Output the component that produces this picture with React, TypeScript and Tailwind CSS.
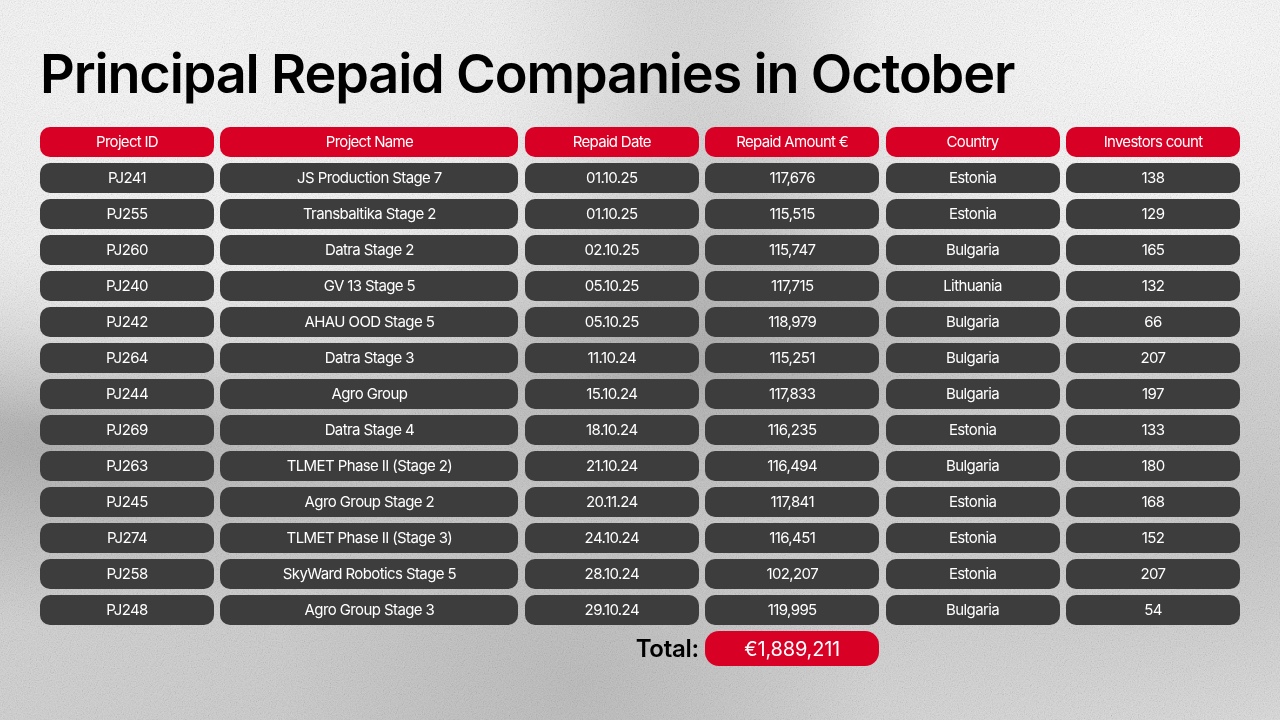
const rows = [
  ["PJ241", "JS Production Stage 7", "01.10.25", "117,676", "Estonia", "138"],
  ["PJ255", "Transbaltika Stage 2", "01.10.25", "115,515", "Estonia", "129"],
  ["PJ260", "Datra Stage 2", "02.10.25", "115,747", "Bulgaria", "165"],
  ["PJ240", "GV 13 Stage 5", "05.10.25", "117,715", "Lithuania", "132"],
  ["PJ242", "AHAU OOD Stage 5", "05.10.25", "118,979", "Bulgaria", "66"],
  ["PJ264", "Datra Stage 3", "11.10.24", "115,251", "Bulgaria", "207"],
  ["PJ244", "Agro Group", "15.10.24", "117,833", "Bulgaria", "197"],
  ["PJ269", "Datra Stage 4", "18.10.24", "116,235", "Estonia", "133"],
  ["PJ263", "TLMET Phase II (Stage 2)", "21.10.24", "116,494", "Bulgaria", "180"],
  ["PJ245", "Agro Group Stage 2", "20.11.24", "117,841", "Estonia", "168"],
  ["PJ274", "TLMET Phase II (Stage 3)", "24.10.24", "116,451", "Estonia", "152"],
  ["PJ258", "SkyWard Robotics Stage 5", "28.10.24", "102,207", "Estonia", "207"],
  ["PJ248", "Agro Group Stage 3", "29.10.24", "119,995", "Bulgaria", "54"],
];

const headers = ["Project ID", "Project Name", "Repaid Date", "Repaid Amount €", "Country", "Investors count"];

const gridCols = "grid grid-cols-[174fr_298fr_174fr_174fr_174fr_174fr] gap-x-[6.4px]";

export default function App() {
  return (
    <div
      className="relative w-[1280px] h-[720px] overflow-hidden bg-[#dedede]"
      style={{ fontFamily: "Inter, 'Noto Sans', sans-serif" }}
    >
      {/* background texture */}
      <div className="absolute inset-0 bg-[radial-gradient(ellipse_at_12%_8%,#f8f8f8_0%,#f2f2f2_22%,transparent_40%),radial-gradient(ellipse_at_92%_6%,#fbfbfb_0%,#f3f3f3_18%,transparent_32%),radial-gradient(ellipse_at_60%_8%,#c4c4c4_0%,transparent_25%),radial-gradient(ellipse_at_4%_62%,#b4b4b4_0%,transparent_28%),radial-gradient(ellipse_at_55%_50%,#b0b0b0_0%,transparent_32%),radial-gradient(ellipse_at_45%_95%,#c0c0c0_0%,transparent_30%),radial-gradient(ellipse_at_96%_72%,#cacaca_0%,transparent_32%),linear-gradient(120deg,#dadada_0%,#cdcdcd_50%,#e0e0e0_100%)]" />
      <svg className="absolute inset-0 opacity-[0.35] mix-blend-multiply" width="1280" height="720">
        <filter id="noise">
          <feTurbulence type="fractalNoise" baseFrequency="0.85" numOctaves="2" stitchTiles="stitch" />
          <feColorMatrix type="saturate" values="0" />
          <feComponentTransfer>
            <feFuncR type="linear" slope="1.6" intercept="-0.2" />
            <feFuncG type="linear" slope="1.6" intercept="-0.2" />
            <feFuncB type="linear" slope="1.6" intercept="-0.2" />
          </feComponentTransfer>
        </filter>
        <rect width="100%" height="100%" filter="url(#noise)" />
      </svg>

      <div className="relative px-10 pt-[42px]">
        <h1 className="text-[54px] leading-[64px] font-semibold tracking-[-1.15px] text-black">
          Principal Repaid Companies in October
        </h1>

        <div className="mt-[21px] flex flex-col gap-y-[6px]">
          <div className={gridCols}>
            {headers.map((h) => (
              <div
                key={h}
                className="h-[30px] rounded-[10px] bg-[#d90025] text-white text-[15px] tracking-[-0.7px] flex items-center justify-center"
              >
                {h}
              </div>
            ))}
          </div>
          {rows.map((row) => (
            <div key={row[0]} className={gridCols}>
              {row.map((cell, i) => (
                <div
                  key={i}
                  className="h-[30px] rounded-[10px] bg-[#3d3d3d] text-white text-[15px] tracking-[-0.6px] flex items-center justify-center"
                >
                  {cell}
                </div>
              ))}
            </div>
          ))}
          <div className={gridCols}>
            <div className="col-span-3 flex items-center justify-end text-[24px] font-semibold tracking-[-0.3px] text-black">
              Total:
            </div>
            <div className="h-[35px] rounded-[14px] bg-[#d90025] text-white text-[20px] tracking-[-0.2px] flex items-center justify-center">
              €1,889,211
            </div>
          </div>
        </div>
      </div>
    </div>
  );
}
